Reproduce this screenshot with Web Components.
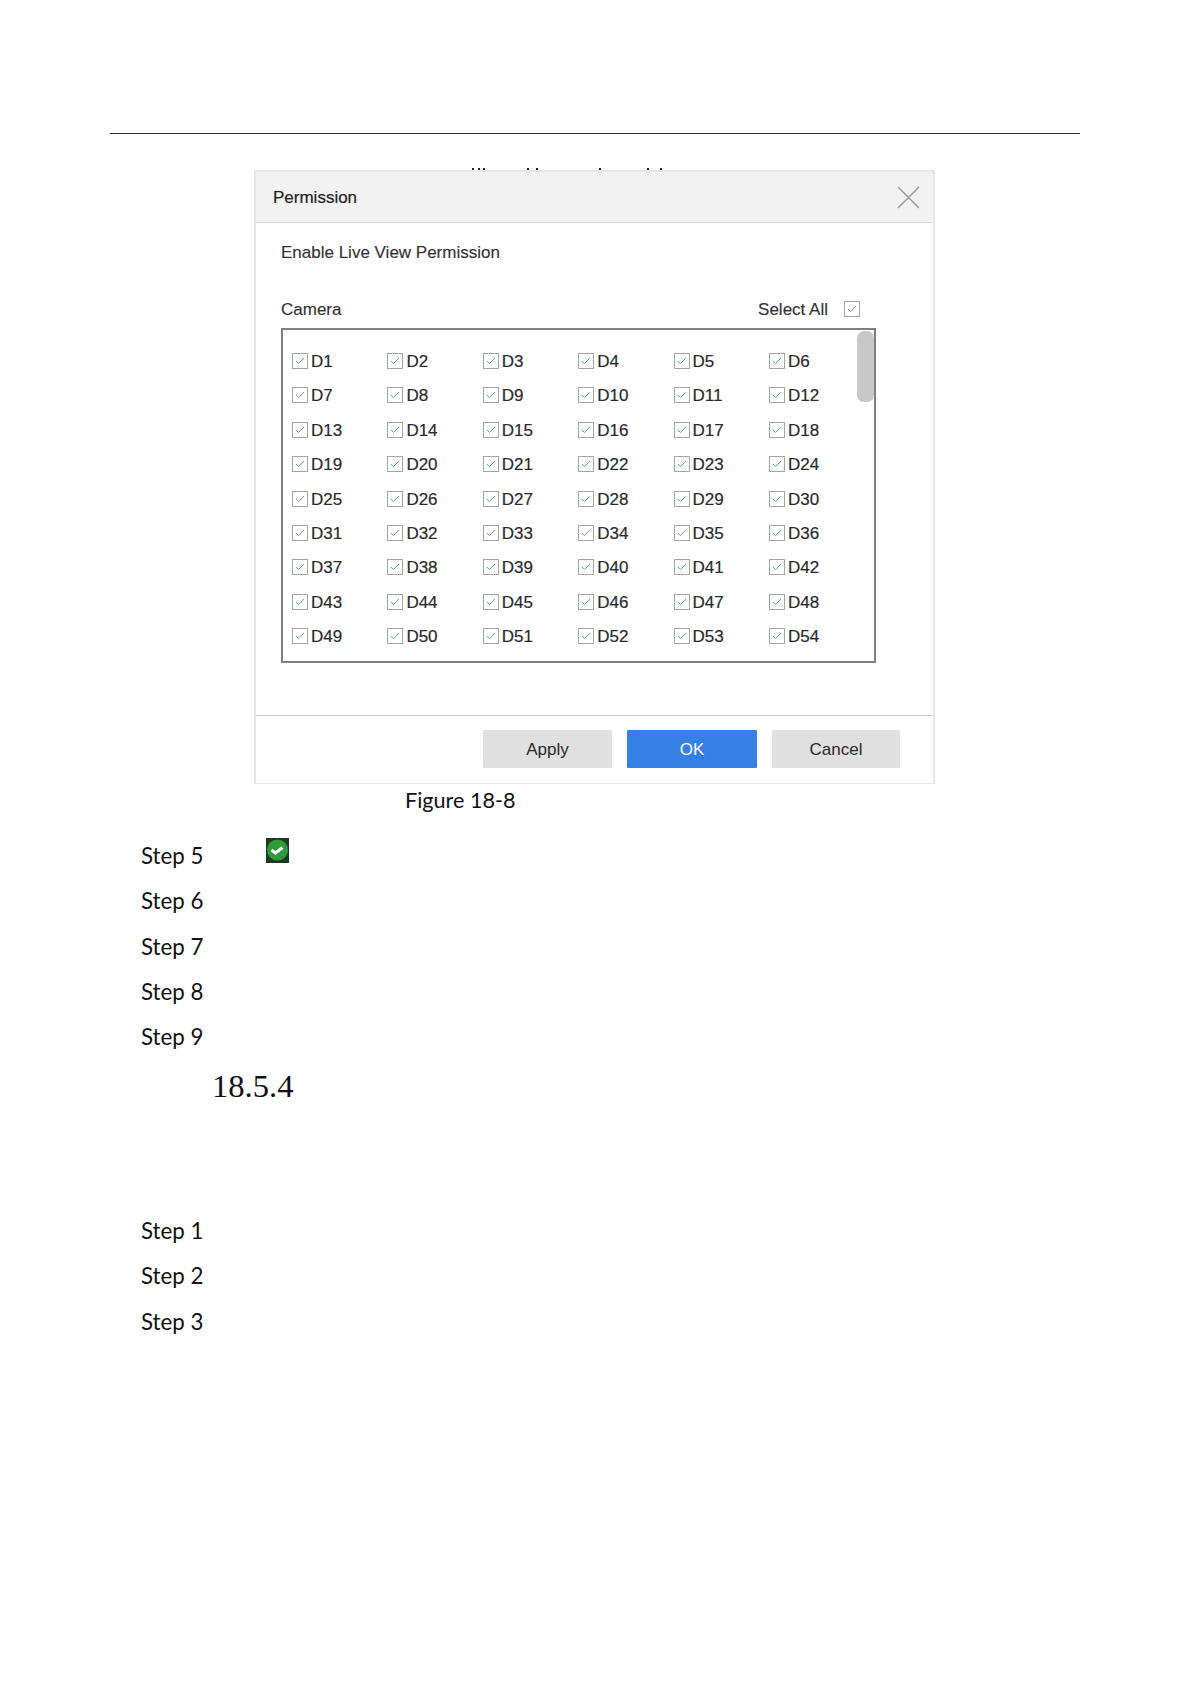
<!DOCTYPE html>
<html>
<head>
<meta charset="utf-8">
<style>
  html, body { margin: 0; background: #fff; }
</style>
</head>
<body>
<manual-page></manual-page>
<script>
class CheckBox extends HTMLElement {
  connectedCallback() {
    if (this.shadowRoot) return;
    this.attachShadow({ mode: 'open' }).innerHTML = `
    <style>
      :host { display: block; width: 16px; height: 16px; flex: none; }
      svg { display: block; }
    </style>
    <svg width="16" height="16" viewBox="0 0 16 16">
      <rect x="0.5" y="0.5" width="15" height="15" fill="#fff" stroke="#a4a4a4"/>
      <path d="M4 8l2.5 2.5L12 5" fill="none" stroke="#5a9ade" stroke-width="1"/>
    </svg>`;
  }
}
customElements.define('check-box', CheckBox);

class CameraItem extends HTMLElement {
  connectedCallback() {
    if (this.shadowRoot) return;
    this.attachShadow({ mode: 'open' }).innerHTML = `
    <style>
      :host { display: flex; align-items: center; gap: 3px; height: 18px; }
      span { font-size: 17px; color: #2a2a2a; line-height: 18px; position: relative; top: 1px; -webkit-text-stroke: 0.2px #2a2a2a; }
    </style>
    <check-box></check-box><span><slot></slot></span>`;
  }
}
customElements.define('camera-item', CameraItem);

class CameraList extends HTMLElement {
  connectedCallback() {
    if (this.shadowRoot) return;
    this.attachShadow({ mode: 'open' }).innerHTML = `
    <style>
      :host {
        display: block; position: relative; box-sizing: border-box;
        width: 595px; height: 335px;
        border: 2px solid #808080; padding: 22px 0 0 9px;
      }
      .grid {
        display: grid;
        grid-template-columns: repeat(6, 95.4px);
        grid-auto-rows: 18px;
        row-gap: 16.4px;
      }
      .thumb {
        position: absolute; top: 1px; right: 0; width: 17px; height: 71px;
        background: #c8c8c8; border-radius: 7px;
      }
    </style>
    <div class="grid"></div>
    <div class="thumb"></div>`;
    const grid = this.shadowRoot.querySelector('.grid');
    for (let i = 1; i <= 54; i++) {
      const item = document.createElement('camera-item');
      item.textContent = 'D' + i;
      grid.appendChild(item);
    }
  }
}
customElements.define('camera-list', CameraList);

class DialogButton extends HTMLElement {
  connectedCallback() {
    if (this.shadowRoot) return;
    this.attachShadow({ mode: 'open' }).innerHTML = `
    <style>
      :host {
        display: flex; align-items: center; justify-content: center;
        width: 129px; height: 38px; background: #e0e0e0; color: #2a2a2a;
        font-size: 17px; border-radius: 1px; padding-top: 1px; box-sizing: border-box;
      }
      :host([primary]) { width: 130px; background: #3580e4; color: #fff; }
      :host([narrow]) { width: 128px; }
    </style>
    <slot></slot>`;
  }
}
customElements.define('dialog-button', DialogButton);

class PermissionDialog extends HTMLElement {
  connectedCallback() {
    if (this.shadowRoot) return;
    this.attachShadow({ mode: 'open' }).innerHTML = `
    <style>
      :host {
        display: block; box-sizing: border-box; width: 681px; height: 614px;
        border: solid #e6e6e6; border-width: 2px 2px 1px 2px;
        font-family: "Liberation Sans", Arial, sans-serif; background: #fff;
      }
      header {
        display: flex; align-items: center; justify-content: space-between;
        box-sizing: border-box; height: 51px; padding: 0 13px 0 17px;
        background: #f2f2f2; border-bottom: 1px solid #d9d9d9;
        font-size: 17px; color: #222;
      }
      header span { position: relative; top: 1px; -webkit-text-stroke: 0.2px #222; }
      header svg { display: block; }
      main { box-sizing: border-box; height: 492px; padding: 20px 0 0 25px; color: #333; font-size: 17px; -webkit-text-stroke: 0.15px #333; }
      .title { height: 20px; line-height: 20px; }
      .row {
        display: flex; justify-content: space-between; align-items: center;
        width: 595px; height: 20px; margin-top: 37px; margin-bottom: 8px; line-height: 20px;
      }
      .all { display: flex; align-items: center; gap: 16px; padding-right: 16px; }
      .all check-box { position: relative; top: -1px; }
      footer {
        display: flex; justify-content: flex-end; gap: 15px;
        box-sizing: border-box; height: 68px; padding: 14px 33px 0 0;
        border-top: 1px solid #cfcfcf;
      }
    </style>
    <header>
      <span>Permission</span>
      <svg width="23" height="23" viewBox="0 0 23 23"><path d="M1 1l21 21M22 1L1 22" stroke="#999" stroke-width="1.5" fill="none"/></svg>
    </header>
    <main>
      <div class="title">Enable Live View Permission</div>
      <div class="row"><span>Camera</span><span class="all">Select All <check-box></check-box></span></div>
      <camera-list></camera-list>
    </main>
    <footer>
      <dialog-button>Apply</dialog-button>
      <dialog-button primary>OK</dialog-button>
      <dialog-button narrow>Cancel</dialog-button>
    </footer>`;
  }
}
customElements.define('permission-dialog', PermissionDialog);

class StepLabel extends HTMLElement {
  connectedCallback() {
    if (this.shadowRoot) return;
    this.attachShadow({ mode: 'open' }).innerHTML = `
    <style>
      :host {
        display: flex; align-items: center; height: 45.3px; padding-left: 141px;
        font-family: Lato, "Open Sans", sans-serif; font-size: 22.3px; color: #111;
      }
      .text { width: 125px; }
    </style>
    <span class="text"><slot></slot></span><slot name="icon"></slot>`;
  }
}
customElements.define('step-label', StepLabel);

class OkIcon extends HTMLElement {
  connectedCallback() {
    if (this.shadowRoot) return;
    this.attachShadow({ mode: 'open' }).innerHTML = `
    <style>
      :host { display: block; width: 23px; height: 25px; position: relative; top: -5px; }
      svg { display: block; }
    </style>
    <svg width="23" height="25" viewBox="0 0 23 25">
      <rect width="23" height="25" fill="#1d3a20"/>
      <circle cx="11.5" cy="12" r="10.5" fill="#2f9a3a"/>
      <path d="M5.5 12l4 3 7-5.5" fill="none" stroke="#fff" stroke-width="3"/>
    </svg>`;
  }
}
customElements.define('ok-icon', OkIcon);

class ManualPage extends HTMLElement {
  connectedCallback() {
    if (this.shadowRoot) return;
    this.attachShadow({ mode: 'open' }).innerHTML = `
    <style>
      :host { display: block; width: 1191px; height: 1684px; overflow: hidden; padding-top: 133px; box-sizing: border-box; }
      .rule { height: 1px; background: #333; margin: 0 111px 0 110px; }
      /* tops of a text line that the dialog covers */
      .cut { display: block; margin: 34px 0 0 254px; }
      permission-dialog { margin: 0 0 0 254px; }
      .caption {
        margin: 0 0 0 405px; height: 32px; line-height: 32px;
        font-family: Lato, "Open Sans", sans-serif; font-size: 21.6px; color: #111;
      }
      .steps { margin-top: 17px; }
      h2 {
        margin: -3px 0 0 212px; height: 60px; line-height: 60px; font-weight: normal;
        font-family: "Liberation Serif", "Times New Roman", serif; font-size: 32.6px; color: #111;
      }
      .steps2 { margin-top: 91px; }
      .steps2 step-label { height: 45.6px; }
    </style>
    <div class="rule"></div>
    <svg class="cut" width="681" height="2" viewBox="0 0 681 2">
      <path d="M218 0h2v2h-2zM224 0h2v2h-2zM229 0h2v2h-2zM273 0h2v2h-2zM282 0h2v2h-2zM345 0h2v2h-2zM393 0h2v2h-2zM406 0h2v2h-2z" fill="#222"/>
    </svg>
    <permission-dialog></permission-dialog>
    <div class="caption">Figure 18-8</div>
    <div class="steps">
      <step-label>Step 5<ok-icon slot="icon"></ok-icon></step-label>
      <step-label>Step 6</step-label>
      <step-label>Step 7</step-label>
      <step-label>Step 8</step-label>
      <step-label>Step 9</step-label>
    </div>
    <h2>18.5.4</h2>
    <div class="steps2">
      <step-label>Step 1</step-label>
      <step-label>Step 2</step-label>
      <step-label>Step 3</step-label>
    </div>`;
  }
}
customElements.define('manual-page', ManualPage);
</script>
</body>
</html>
